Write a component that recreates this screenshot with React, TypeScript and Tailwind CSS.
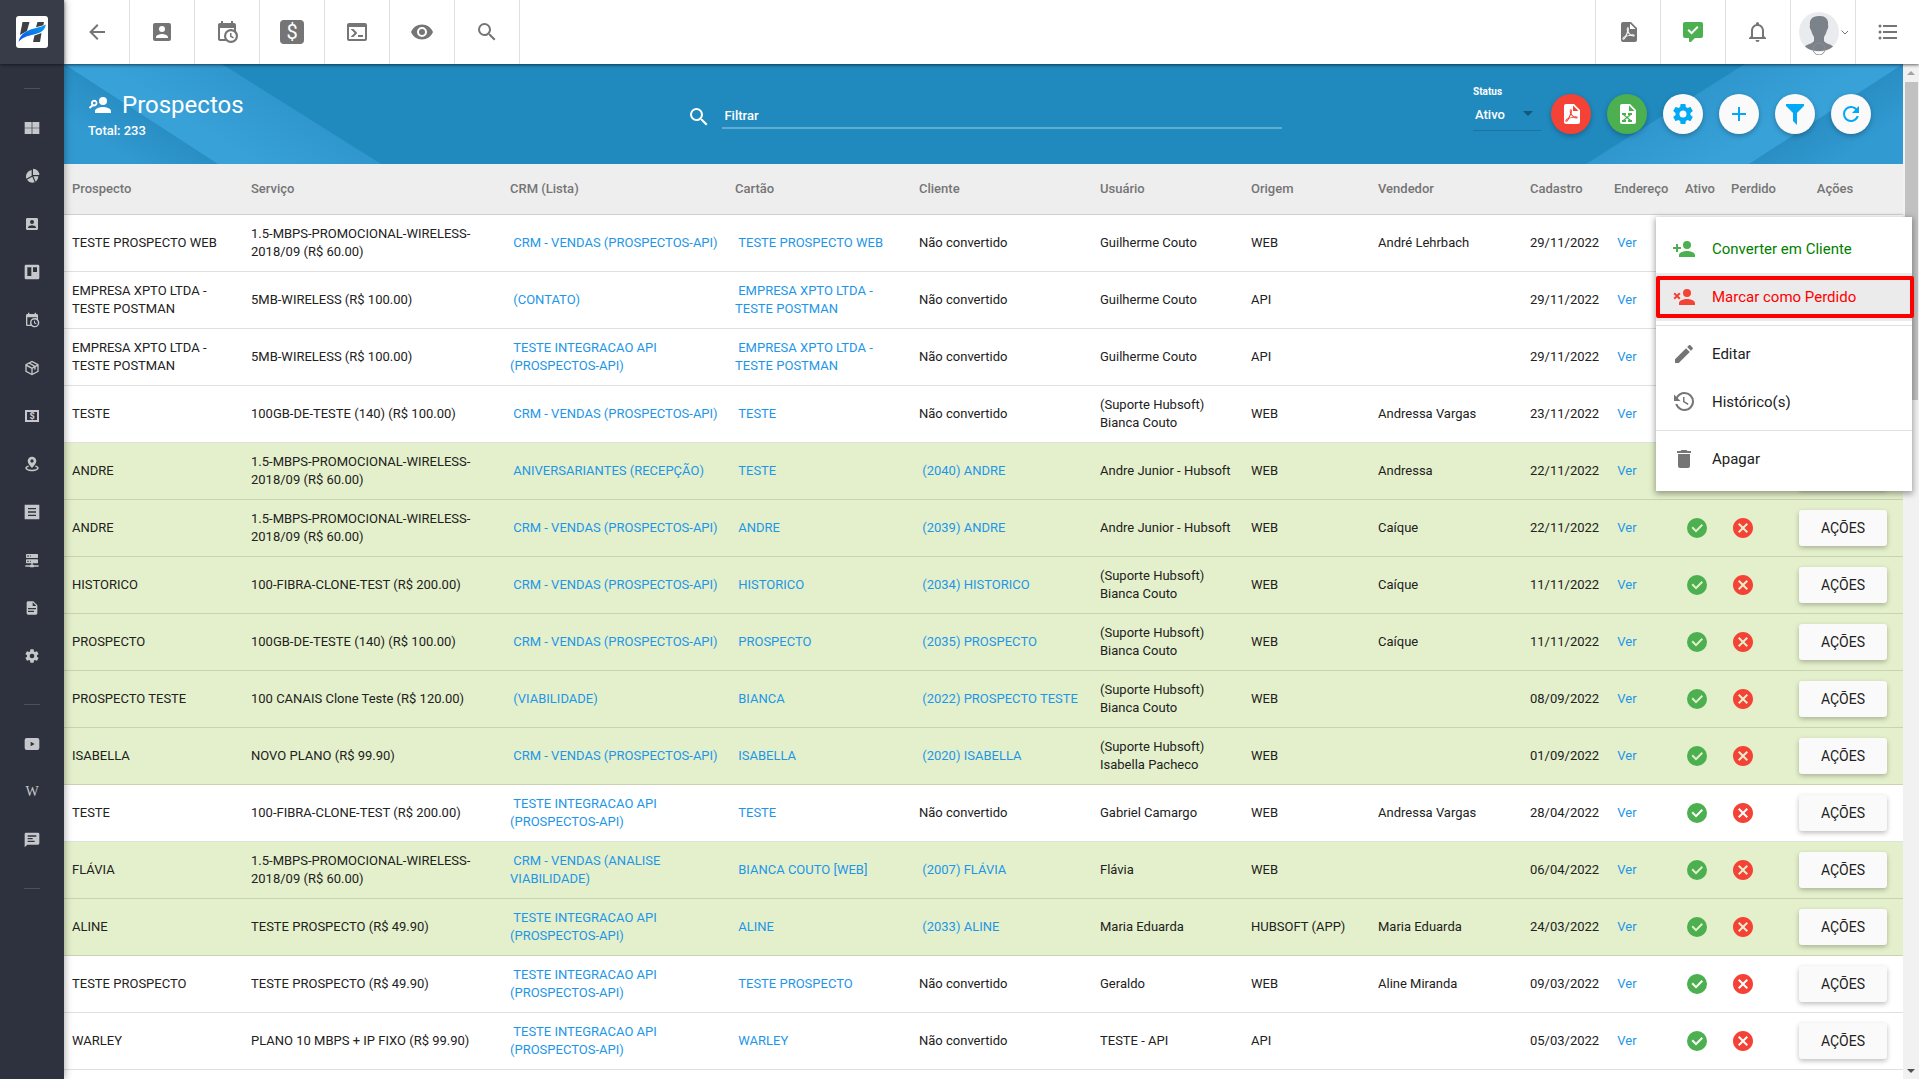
import React, { useState } from "react";

const icons = {
  arrowLeft:
    "M20,11V13H8L13.5,18.5L12.08,19.92L4.16,12L12.08,4.08L13.5,5.5L8,11H20Z",
  accountBox:
    "M6,17C6,15 10,13.9 12,13.9C14,13.9 18,15 18,17V18H6M15,9A3,3 0 0,1 12,12A3,3 0 0,1 9,9A3,3 0 0,1 12,6A3,3 0 0,1 15,9M3,5V19A2,2 0 0,0 5,21H19A2,2 0 0,0 21,19V5A2,2 0 0,0 19,3H5C3.89,3 3,3.9 3,5Z",
  calendarClock:
    "M15,13H16.5V15.82L18.94,17.23L18.19,18.53L15,16.69V13M19,8H5V19H9.67C9.24,18.09 9,17.07 9,16A7,7 0 0,1 16,9C17.07,9 18.09,9.24 19,9.67V8M5,21C3.89,21 3,20.1 3,19V5C3,3.89 3.89,3 5,3H6V1H8V3H16V1H18V3H19A2,2 0 0,1 21,5V11.1C22.24,12.36 23,14.09 23,16A7,7 0 0,1 16,23C14.09,23 12.36,22.24 11.1,21H5M16,11.15A4.85,4.85 0 0,0 11.15,16C11.15,18.68 13.32,20.85 16,20.85A4.85,4.85 0 0,0 20.85,16C20.85,13.32 18.68,11.15 16,11.15Z",
  console:
    "M20,19V7H4V19H20M20,3A2,2 0 0,1 22,5V19A2,2 0 0,1 20,21H4A2,2 0 0,1 2,19V5C2,3.89 2.9,3 4,3H20M13,17V15H18V17H13M9.58,13L5.57,9H8.4L11.7,12.3C12.09,12.69 12.09,13.33 11.7,13.72L8.42,17H5.59L9.58,13Z",
  eye: "M12,9A3,3 0 0,0 9,12A3,3 0 0,0 12,15A3,3 0 0,0 15,12A3,3 0 0,0 12,9M12,17A5,5 0 0,1 7,12A5,5 0 0,1 12,7A5,5 0 0,1 17,12A5,5 0 0,1 12,17M12,4.5C7,4.5 2.73,7.61 1,12C2.73,16.39 7,19.5 12,19.5C17,19.5 21.27,16.39 23,12C21.27,7.61 17,4.5 12,4.5Z",
  magnify:
    "M9.5,3A6.5,6.5 0 0,1 16,9.5C16,11.11 15.41,12.59 14.44,13.73L14.71,14H15.5L20.5,19L19,20.5L14,15.5V14.71L13.73,14.44C12.59,15.41 11.11,16 9.5,16A6.5,6.5 0 0,1 3,9.5A6.5,6.5 0 0,1 9.5,3M9.5,5C7,5 5,7 5,9.5C5,12 7,14 9.5,14C12,14 14,12 14,9.5C14,7 12,5 9.5,5Z",
  cog: "M12,15.5A3.5,3.5 0 0,1 8.5,12A3.5,3.5 0 0,1 12,8.5A3.5,3.5 0 0,1 15.5,12A3.5,3.5 0 0,1 12,15.5M19.43,12.97C19.47,12.65 19.5,12.33 19.5,12C19.5,11.67 19.47,11.34 19.43,11L21.54,9.37C21.73,9.22 21.78,8.95 21.66,8.73L19.66,5.27C19.54,5.05 19.27,4.96 19.05,5.05L16.56,6.05C16.04,5.66 15.5,5.32 14.87,5.07L14.5,2.42C14.46,2.18 14.25,2 14,2H10C9.75,2 9.54,2.18 9.5,2.42L9.13,5.07C8.5,5.32 7.96,5.66 7.44,6.05L4.95,5.05C4.73,4.96 4.46,5.05 4.34,5.27L2.34,8.73C2.21,8.95 2.27,9.22 2.46,9.37L4.57,11C4.53,11.34 4.5,11.67 4.5,12C4.5,12.33 4.53,12.65 4.57,12.97L2.46,14.63C2.27,14.78 2.21,15.05 2.34,15.27L4.34,18.73C4.46,18.95 4.73,19.03 4.95,18.95L7.44,17.94C7.96,18.34 8.5,18.68 9.13,18.93L9.5,21.58C9.54,21.82 9.75,22 10,22H14C14.25,22 14.46,21.82 14.5,21.58L14.87,18.93C15.5,18.67 16.04,18.34 16.56,17.94L19.05,18.95C19.27,19.03 19.54,18.95 19.66,18.73L21.66,15.27C21.78,15.05 21.73,14.78 21.54,14.63L19.43,12.97Z",
  filePdf:
    "M14,9H19.5L14,3.5V9M7,2H15L21,8V20A2,2 0 0,1 19,22H7C5.89,22 5,21.1 5,20V4A2,2 0 0,1 7,2M11.93,12.44C12.34,13.34 12.86,14.08 13.46,14.59L13.87,14.91C13,15.07 11.8,15.35 10.53,15.84V15.84L10.42,15.88L10.92,14.84C11.37,13.97 11.7,13.18 11.93,12.44M18.41,16.25C18.59,16.07 18.68,15.84 18.69,15.59C18.72,15.39 18.67,15.2 18.57,15.04C18.28,14.57 17.53,14.35 16.29,14.35L15,14.42L14.13,13.84C13.5,13.32 12.93,12.41 12.53,11.28L12.57,11.14C12.9,9.81 13.21,8.2 12.55,7.54C12.39,7.38 12.17,7.3 11.94,7.3H11.7C11.33,7.3 11,7.69 10.91,8.07C10.54,9.4 10.76,10.13 11.13,11.34V11.35C10.88,12.23 10.56,13.25 10.05,14.28L9.09,16.08L8.2,16.57C7,17.32 6.43,18.16 6.32,18.69C6.28,18.88 6.3,19.05 6.37,19.23L6.4,19.28L6.88,19.59L7.32,19.7C8.13,19.7 9.05,18.75 10.29,16.63L10.47,16.56C11.5,16.23 12.78,16 14.5,15.81C15.53,16.32 16.74,16.55 17.5,16.55C17.94,16.55 18.24,16.44 18.41,16.25M18,15.54L18.09,15.65C18.08,15.75 18.05,15.76 18,15.78H17.96L17.77,15.8C17.31,15.8 16.6,15.61 15.87,15.29C15.96,15.19 16,15.19 16.1,15.19C17.5,15.19 17.9,15.44 18,15.54M8.83,17C8.18,18.19 7.59,18.85 7.14,19C7.19,18.62 7.64,17.96 8.35,17.31L8.83,17M11.85,10.09C11.62,9.19 11.61,8.46 11.78,8.04L11.85,7.92L12,7.97C12.17,8.21 12.19,8.53 12.09,9.07L12.06,9.23L11.9,10.05L11.85,10.09Z",
  fileExcel:
    "M14,9H19.5L14,3.5V9M7,2H15L21,8V20A2,2 0 0,1 19,22H7C5.89,22 5,21.1 5,20V4A2,2 0 0,1 7,2M17,11H13V13H14L12,14.67L10,13H11V11H7V13H8L11,15.5L8,18H7V20H11V18H10L12,16.33L14,18H13V20H17V18H16L13,15.5L16,13H17V11Z",
  messageCheck:
    "M9,22A1,1 0 0,1 8,21V18H4A2,2 0 0,1 2,16V4C2,2.89 2.9,2 4,2H20A2,2 0 0,1 22,4V16A2,2 0 0,1 20,18H13.9L10.2,21.71C10,21.9 9.75,22 9.5,22H9M10.5,14.5L17.5,7.5L16.09,6.09L10.5,11.67L7.91,9.09L6.5,10.5Z",
  bell: "M16,17H7V10.5C7,8 9,6 11.5,6C14,6 16,8 16,10.5M18,16V10.5C18,7.43 15.86,4.86 13,4.18V3.5A1.5,1.5 0 0,0 11.5,2A1.5,1.5 0 0,0 10,3.5V4.18C7.13,4.86 5,7.43 5,10.5V16L3,18V19H20V18M11.5,22A2,2 0 0,0 13.5,20H9.5A2,2 0 0,0 11.5,22Z",
  list: "M7,5H21V7H7V5M7,13V11H21V13H7M4,4.5A1.5,1.5 0 0,1 5.5,6A1.5,1.5 0 0,1 4,7.5A1.5,1.5 0 0,1 2.5,6A1.5,1.5 0 0,1 4,4.5M4,10.5A1.5,1.5 0 0,1 5.5,12A1.5,1.5 0 0,1 4,13.5A1.5,1.5 0 0,1 2.5,12A1.5,1.5 0 0,1 4,10.5M7,19V17H21V19H7M4,16.5A1.5,1.5 0 0,1 5.5,18A1.5,1.5 0 0,1 4,19.5A1.5,1.5 0 0,1 2.5,18A1.5,1.5 0 0,1 4,16.5Z",
  accountPlus:
    "M15,14C12.33,14 7,15.33 7,18V20H23V18C23,15.33 17.67,14 15,14M6,10V7H4V10H1V12H4V15H6V12H9V10M15,12A4,4 0 0,0 19,8A4,4 0 0,0 15,4A4,4 0 0,0 11,8A4,4 0 0,0 15,12Z",
  accountRemove:
    "M15,14C12.33,14 7,15.33 7,18V20H23V18C23,15.33 17.67,14 15,14M5,9.59L2.88,7.46L1.46,8.88L3.59,11L1.46,13.12L2.88,14.54L5,12.41L7.12,14.54L8.54,13.12L6.41,11L8.54,8.88L7.12,7.46M15,12A4,4 0 0,0 19,8A4,4 0 0,0 15,4A4,4 0 0,0 11,8A4,4 0 0,0 15,12Z",
  accountSearch:
    "M15,14C12.33,14 7,15.33 7,18V20H23V18C23,15.33 17.67,14 15,14M15,12A4,4 0 0,0 19,8A4,4 0 0,0 15,4A4,4 0 0,0 11,8A4,4 0 0,0 15,12M6.2,6.8A3.3,3.3 0 0,0 3.4,11.9L0.8,14.2L2.2,15.8L5,13.2A3.3,3.3 0 1,0 6.2,6.8M6.3,8.7A1.4,1.4 0 0,1 6.3,11.5A1.4,1.4 0 0,1 6.3,8.7Z",
  pencil:
    "M20.71,7.04C21.1,6.65 21.1,6 20.71,5.63L18.37,3.29C18,2.9 17.35,2.9 16.96,3.29L15.12,5.12L18.87,8.87M3,17.25V21H6.75L17.81,9.93L14.06,6.18L3,17.25Z",
  history:
    "M11,7V12.11L15.71,14.9L16.5,13.62L12.5,11.25V7M12.5,2C8.97,2 5.91,3.92 4.27,6.77L2,4.5V11H8.5L5.75,8.25C6.96,5.73 9.5,4 12.5,4A7.5,7.5 0 0,1 20,11.5A7.5,7.5 0 0,1 12.5,19C9.23,19 6.47,16.91 5.44,14H3.34C4.44,18.03 8.11,21 12.5,21C17.74,21 22,16.75 22,11.5A9.5,9.5 0 0,0 12.5,2Z",
  trash:
    "M19,4H15.5L14.5,3H9.5L8.5,4H5V6H19M6,19A2,2 0 0,0 8,21H16A2,2 0 0,0 18,19V7H6V19Z",
  server:
    "M13,19H14A1,1 0 0,1 15,20H22V22H15A1,1 0 0,1 14,23H10A1,1 0 0,1 9,22H2V20H9A1,1 0 0,1 10,19H11V17H4A1,1 0 0,1 3,16V12A1,1 0 0,1 4,11H20A1,1 0 0,1 21,12V16A1,1 0 0,1 20,17H13V19M4,3H20A1,1 0 0,1 21,4V8A1,1 0 0,1 20,9H4A1,1 0 0,1 3,8V4A1,1 0 0,1 4,3M9,7H10V5H9V7M9,15H10V13H9V15M5,5V7H7V5H5M5,13V15H7V13H5Z",
  fileDocument:
    "M13,9H18.5L13,3.5V9M6,2H14L20,8V20A2,2 0 0,1 18,22H6C4.89,22 4,21.1 4,20V4C4,2.89 4.89,2 6,2M15,18V16H6V18H15M18,14V12H6V14H18Z",
  grid: "M1,3H11.5V11.5H1V3M12.5,3H23V11.5H12.5V3M1,12.5H11.5V21H1V12.5M12.5,12.5H23V21H12.5V12.5Z",
  pie: "M13.5,1A9.5,9.5 0 0,1 23,10.5H13.5V1M11.5,3V11.6L3.5,16A10,10 0 0,1 11.5,3M12.4,13L16,21.5A10,10 0 0,1 4.5,17.6L12.4,13M14,12.5H21.5A9.5,9.5 0 0,1 17.6,20.5L14,12.5Z",
  trello:
    "M3,1H21A2,2 0 0,1 23,3V21A2,2 0 0,1 21,23H3A2,2 0 0,1 1,21V3A2,2 0 0,1 3,1M5,5V18H11V5H5M13.5,5V12H19.500V5H13.500Z",
  cube: "M12,1L22,6.2V17.8L12,23L2,17.8V6.2L12,1M12,3.4L9.6,4.6L16.8,8.6L19.2,7.3L12,3.4M7.4,5.8L4.8,7.3L12,11.2L14.6,9.8L7.4,5.8M4,9.2V16.6L11,20.3V13L4,9.2M20,9.2L17.5,10.6V14L15.5,15V11.7L13,13V20.3L20,16.6V9.2Z",
  mapMarker:
    "M12,1A6.5,6.5 0 0,1 18.5,7.5C18.5,11.5 12,18 12,18C12,18 5.5,11.5 5.5,7.5A6.5,6.5 0 0,1 12,1M12,5A2.5,2.5 0 0,0 9.5,7.5A2.5,2.5 0 0,0 12,10A2.5,2.5 0 0,0 14.5,7.5A2.5,2.5 0 0,0 12,5M6.5,14.2L7.8,15.9C5.8,16.4 4.5,17.2 4.5,18C4.5,19.4 7.8,20.6 12,20.6C16.2,20.6 19.5,19.4 19.5,18C19.5,17.2 18.2,16.4 16.2,15.9L17.5,14.2C20.2,15 22,16.4 22,18C22,20.8 17.5,23 12,23C6.5,23 2,20.8 2,18C2,16.4 3.8,15 6.5,14.2Z",
  listBox:
    "M1,1H23V23H1V1M6,6V8H18V6H6M6,11V13H18V11H6M6,16V18H18V16H6Z",
  youtube:
    "M4,3H20A3,3 0 0,1 23,6V18A3,3 0 0,1 20,21H4A3,3 0 0,1 1,18V6A3,3 0 0,1 4,3M10,8.5V15.5L16,12L10,8.5Z",
  messageText:
    "M21,1A2,2 0 0,1 23,3V17A2,2 0 0,1 21,19H5L1,23V3C1,1.9 1.9,1 3,1H21M5.5,5V7H18.5V5H5.5M5.5,9V11H13V9H5.5M5.5,13V15H16V13H5.5Z",
  checkCircle:
    "M12,2A10,10 0 0,1 22,12A10,10 0 0,1 12,22A10,10 0 0,1 2,12A10,10 0 0,1 12,2M11,16.5L18,9.5L16.59,8.09L11,13.67L7.91,10.59L6.5,12L11,16.5Z",
  closeCircle:
    "M12,2C17.53,2 22,6.47 22,12C22,17.53 17.53,22 12,22C6.47,22 2,17.53 2,12C2,6.47 6.47,2 12,2M15.59,7L12,10.59L8.41,7L7,8.41L10.59,12L7,15.59L8.41,17L12,13.41L15.59,17L17,15.59L13.41,12L17,8.41L15.59,7Z",
  filter: "M3,2H21V4H20.92L14,10.92V22.91L10,18.91V10.91L3.09,4H3V2Z",
  refresh:
    "M17.65,6.35C16.2,4.9 14.21,4 12,4A8,8 0 0,0 4,12A8,8 0 0,0 12,20C15.73,20 18.84,17.45 19.73,14H17.65C16.83,16.33 14.61,18 12,18A6,6 0 0,1 6,12A6,6 0 0,1 12,6C13.66,6 15.14,6.69 16.22,7.78L13,11H20V4L17.65,6.35Z",
  plus: "M19,13H13V19H11V13H5V11H11V5H13V11H19V13Z",
};

type IconName = keyof typeof icons;

const Icon: React.FC<{ name: IconName; className?: string }> = ({
  name,
  className = "size-6",
}) => (
  <svg
    viewBox="0 0 24 24"
    fill="currentColor"
    fillRule="evenodd"
    className={className}
    aria-hidden="true"
  >
    <path d={icons[name]} />
  </svg>
);

interface Prospect {
  name: string;
  service: string;
  crm: string;
  card: string;
  client?: string;
  user: string;
  origin: string;
  seller?: string;
  date: string;
}

const wireless = "1.5-MBPS-PROMOCIONAL-WIRELESS-2018/09 (R$ 60.00)";
const vendas = "CRM - VENDAS (PROSPECTOS-API)";
const integracao = "TESTE INTEGRACAO API (PROSPECTOS-API)";
const bianca = "(Suporte Hubsoft) Bianca Couto";

const prospects: Prospect[] = [
  { name: "TESTE PROSPECTO WEB", service: wireless, crm: vendas, card: "TESTE PROSPECTO WEB", user: "Guilherme Couto", origin: "WEB", seller: "André Lehrbach", date: "29/11/2022" },
  { name: "EMPRESA XPTO LTDA - TESTE POSTMAN", service: "5MB-WIRELESS (R$ 100.00)", crm: "(CONTATO)", card: "EMPRESA XPTO LTDA - TESTE POSTMAN", user: "Guilherme Couto", origin: "API", date: "29/11/2022" },
  { name: "EMPRESA XPTO LTDA - TESTE POSTMAN", service: "5MB-WIRELESS (R$ 100.00)", crm: integracao, card: "EMPRESA XPTO LTDA - TESTE POSTMAN", user: "Guilherme Couto", origin: "API", date: "29/11/2022" },
  { name: "TESTE", service: "100GB-DE-TESTE (140) (R$ 100.00)", crm: vendas, card: "TESTE", user: bianca, origin: "WEB", seller: "Andressa Vargas", date: "23/11/2022" },
  { name: "ANDRE", service: wireless, crm: "ANIVERSARIANTES (RECEPÇÃO)", card: "TESTE", client: "(2040) ANDRE", user: "Andre Junior - Hubsoft", origin: "WEB", seller: "Andressa", date: "22/11/2022" },
  { name: "ANDRE", service: wireless, crm: vendas, card: "ANDRE", client: "(2039) ANDRE", user: "Andre Junior - Hubsoft", origin: "WEB", seller: "Caíque", date: "22/11/2022" },
  { name: "HISTORICO", service: "100-FIBRA-CLONE-TEST (R$ 200.00)", crm: vendas, card: "HISTORICO", client: "(2034) HISTORICO", user: bianca, origin: "WEB", seller: "Caíque", date: "11/11/2022" },
  { name: "PROSPECTO", service: "100GB-DE-TESTE (140) (R$ 100.00)", crm: vendas, card: "PROSPECTO", client: "(2035) PROSPECTO", user: bianca, origin: "WEB", seller: "Caíque", date: "11/11/2022" },
  { name: "PROSPECTO TESTE", service: "100 CANAIS Clone Teste (R$ 120.00)", crm: "(VIABILIDADE)", card: "BIANCA", client: "(2022) PROSPECTO TESTE", user: bianca, origin: "WEB", date: "08/09/2022" },
  { name: "ISABELLA", service: "NOVO PLANO (R$ 99.90)", crm: vendas, card: "ISABELLA", client: "(2020) ISABELLA", user: "(Suporte Hubsoft) Isabella Pacheco", origin: "WEB", date: "01/09/2022" },
  { name: "TESTE", service: "100-FIBRA-CLONE-TEST (R$ 200.00)", crm: integracao, card: "TESTE", user: "Gabriel Camargo", origin: "WEB", seller: "Andressa Vargas", date: "28/04/2022" },
  { name: "FLÁVIA", service: wireless, crm: "CRM - VENDAS (ANALISE VIABILIDADE)", card: "BIANCA COUTO [WEB]", client: "(2007) FLÁVIA", user: "Flávia", origin: "WEB", date: "06/04/2022" },
  { name: "ALINE", service: "TESTE PROSPECTO (R$ 49.90)", crm: integracao, card: "ALINE", client: "(2033) ALINE", user: "Maria Eduarda", origin: "HUBSOFT (APP)", seller: "Maria Eduarda", date: "24/03/2022" },
  { name: "TESTE PROSPECTO", service: "TESTE PROSPECTO (R$ 49.90)", crm: integracao, card: "TESTE PROSPECTO", user: "Geraldo", origin: "WEB", seller: "Aline Miranda", date: "09/03/2022" },
  { name: "WARLEY", service: "PLANO 10 MBPS + IP FIXO (R$ 99.90)", crm: integracao, card: "WARLEY", user: "TESTE - API", origin: "API", date: "05/03/2022" },
];

const columns = [
  { label: "Prospecto", width: "w-[179px]" },
  { label: "Serviço", width: "w-[259px]" },
  { label: "CRM (Lista)", width: "w-[225px]" },
  { label: "Cartão", width: "w-[184px]" },
  { label: "Cliente", width: "w-[181px]" },
  { label: "Usuário", width: "w-[151px]" },
  { label: "Origem", width: "w-[127px]" },
  { label: "Vendedor", width: "w-[152px]" },
  { label: "Cadastro", width: "w-[84px]" },
  { label: "Endereço", width: "w-[71px]" },
  { label: "Ativo", width: "w-[46px]" },
  { label: "Perdido", width: "w-[60px]" },
  { label: "Ações", width: "w-[120px]" },
];

const Logo = () => (
  <svg viewBox="0 0 32 32" className="size-8" role="img" aria-label="Hubsoft">
    <defs>
      <linearGradient id="swoosh" x1="0" y1="1" x2="1" y2="0">
        <stop offset="0" stopColor="#0b4df5" />
        <stop offset="1" stopColor="#0aa2ea" />
      </linearGradient>
    </defs>
    <rect width="32" height="32" rx="3" fill="#fff" />
    <path d="M6.5 6H13.500L11 15L4 19Z" fill="#3f4044" />
    <path d="M21.500 6H28L27.300 9.200L20 11.200Z" fill="#3f4044" />
    <path d="M18.500 19.500L25.500 17L24 26H17Z" fill="#3f4044" />
    <path
      d="M2.500 26C4 17 13 13.500 20 12C24 11.200 27 10 29.800 8.500C29 14 25 17 18 18.500C11 20 6 21.500 2.500 26Z"
      fill="url(#swoosh)"
    />
  </svg>
);

const sideIcons: IconName[] = ["grid", "pie", "accountBox", "trello", "calendarClock", "cube"];
const sideIconsBottom: IconName[] = ["mapMarker", "listBox", "server", "fileDocument", "cog"];

const SideLink: React.FC<{ label: string; children: React.ReactNode }> = ({
  label,
  children,
}) => (
  <a
    href="#"
    aria-label={label}
    className="flex h-12 w-full items-center justify-center text-[#c6c7ca]"
  >
    {children}
  </a>
);

const Sidebar = () => (
  <aside className="z-20 flex w-16 shrink-0 flex-col bg-[#2d323e] shadow-[0_0_8px_rgba(0,0,0,0.4)]">
    <div className="flex h-16 shrink-0 items-center justify-center bg-[#383c49] shadow-[0_1px_3px_rgba(0,0,0,0.5)]">
      <Logo />
    </div>
    <nav className="flex flex-col items-center">
      <hr className="mt-6 mb-[15px] w-4 border-[#4c505b]" />
      {sideIcons.map((name) => (
        <SideLink key={name} label={name}>
          <Icon name={name} className="size-4" />
        </SideLink>
      ))}
      <SideLink label="financeiro">
        <span className="flex h-3 w-[14px] items-center justify-center border-2 border-current text-[9px] leading-none font-black">
          $
        </span>
      </SideLink>
      {sideIconsBottom.map((name) => (
        <SideLink key={name} label={name}>
          <Icon name={name} className="size-4" />
        </SideLink>
      ))}
      <hr className="mt-6 mb-[15px] w-4 border-[#4c505b]" />
      <SideLink label="youtube">
        <Icon name="youtube" className="size-4" />
      </SideLink>
      <SideLink label="wiki">
        <span className="font-['Liberation_Serif',serif] text-[14px] leading-none">
          W
        </span>
      </SideLink>
      <SideLink label="chat">
        <Icon name="messageText" className="size-4" />
      </SideLink>
      <hr className="mt-6 w-4 border-[#4c505b]" />
    </nav>
  </aside>
);

const BarButton: React.FC<{
  label: string;
  side: "left" | "right";
  children: React.ReactNode;
}> = ({ label, side, children }) => (
  <button
    type="button"
    aria-label={label}
    className={`flex h-16 items-center justify-center border-[#e0e0e0] text-[#757575] ${
      side === "left"
        ? "w-[65px] border-r first:w-[66px]"
        : "w-[65px] border-l last:w-16"
    }`}
  >
    {children}
  </button>
);

const Topbar = () => (
  <header className="z-10 flex h-16 shrink-0 justify-between bg-white shadow-[0_1px_3px_rgba(0,0,0,0.6)]">
    <div className="flex">
      <BarButton label="Voltar" side="left">
        <Icon name="arrowLeft" />
      </BarButton>
      <BarButton label="Clientes" side="left">
        <Icon name="accountBox" />
      </BarButton>
      <BarButton label="Agenda" side="left">
        <Icon name="calendarClock" />
      </BarButton>
      <BarButton label="Financeiro" side="left">
        <span className="flex size-6 items-center justify-center rounded bg-[#757575] text-[20px] leading-none text-white">
          $
        </span>
      </BarButton>
      <BarButton label="Console" side="left">
        <Icon name="console" />
      </BarButton>
      <BarButton label="Visualizar" side="left">
        <Icon name="eye" />
      </BarButton>
      <BarButton label="Buscar" side="left">
        <Icon name="magnify" />
      </BarButton>
    </div>
    <div className="flex">
      <BarButton label="PDF" side="right">
        <Icon name="filePdf" />
      </BarButton>
      <BarButton label="Mensagens" side="right">
        <Icon name="messageCheck" className="size-6 text-[#4caf50]" />
      </BarButton>
      <BarButton label="Notificações" side="right">
        <Icon name="bell" />
      </BarButton>
      <BarButton label="Usuário" side="right">
        <svg viewBox="0 0 50 46" className="h-[46px] w-[50px]" aria-hidden="true">
          <circle cx="21" cy="23" r="20" fill="#e9ebee" />
          <path
            d="M21 7C27 6.500 31 10 30 16C30.600 17 30.200 20 29 21C28 25 27 26 26 28V32C28 35 33 35 35 37.500C29 43.500 13 43.500 7 37.500C9 35 14 35 16 32V28C15 26 14 25 13 21C11.800 20 11.400 17 12 16C11 11 14 7 21 7Z"
            fill="#7b828a"
          />
          <circle cx="21" cy="40" r="6" fill="none" stroke="#8d8f92" />
          <path d="M44.500 21.500L48 25L51.500 21.500" transform="translate(-1 0)" fill="none" stroke="#757575" />
        </svg>
      </BarButton>
      <BarButton label="Menu" side="right">
        <Icon name="list" />
      </BarButton>
    </div>
  </header>
);

const RoundButton: React.FC<{
  label: string;
  icon: IconName;
  className?: string;
}> = ({ label, icon, className = "bg-[#fafafa] text-[#03a9f4]" }) => (
  <button
    type="button"
    aria-label={label}
    className={`flex size-10 items-center justify-center rounded-full shadow-[0_2px_5px_rgba(0,0,0,0.26)] ${className}`}
  >
    <Icon name={icon} />
  </button>
);

// folded paper stripes, mirrored on the right side of the header
const HeaderStripes: React.FC<{ className: string }> = ({ className }) => (
  <svg
    viewBox="0 0 320 100"
    className={`absolute top-0 h-full w-80 ${className}`}
    aria-hidden="true"
  >
    <defs>
      <linearGradient id="band" gradientUnits="userSpaceOnUse" x1="236" y1="50" x2="200" y2="106">
        <stop offset="0" stopColor="#2f97ce" />
        <stop offset="1" stopColor="#38a1d8" />
      </linearGradient>
      <linearGradient id="fold" gradientUnits="userSpaceOnUse" x1="77" y1="50" x2="52" y2="89">
        <stop offset="0" stopColor="#298ec4" />
        <stop offset="1" stopColor="#319ad1" />
      </linearGradient>
    </defs>
    <path d="M0 0H158L317 100H0Z" fill="url(#band)" />
    <path d="M0 0L154 100H0Z" fill="url(#fold)" />
  </svg>
);

const PageHeader = () => {
  const [filter, setFilter] = useState("");

  return (
    <div className="relative flex h-[100px] items-start justify-between bg-[#2089be] pr-8 pl-6 text-white">
      <HeaderStripes className="left-0" />
      <HeaderStripes className="right-0 -scale-x-100" />
      <div className="relative pt-[26px]">
        <h1 className="flex items-center gap-[10px] text-2xl leading-[30px]">
          <Icon name="accountSearch" />
          Prospectos
        </h1>
        <p className="text-[13px] leading-[22px] font-medium">Total: 233</p>
      </div>
      <div className="absolute top-0 left-[33.9%] flex w-[595px] gap-[11px] pt-10">
        <Icon name="magnify" className="mt-px size-6 shrink-0" />
        <input
          type="text"
          aria-label="Filtrar"
          placeholder="Filtrar"
          value={filter}
          onChange={(e) => setFilter(e.target.value)}
          className="h-[25px] w-full border-b-2 border-white/30 px-[2px] text-[13px] leading-5 font-medium outline-none placeholder:text-white"
        />
      </div>
      <div className="relative flex pt-[30px]">
        <div className="mr-[10px] -mt-2 flex w-[68px] flex-col">
          <label htmlFor="status" className="text-[10px] leading-3 font-bold">
            Status
          </label>
          <div className="relative mt-1 border-b border-black/15">
            <select
              id="status"
              className="h-[26px] w-full appearance-none bg-transparent px-[2px] pb-1 text-[13px] font-medium"
            >
              <option>Ativo</option>
            </select>
            <span className="pointer-events-none absolute top-[9px] right-2 border-x-[5px] border-t-[5px] border-x-transparent border-t-[#14587a]" />
          </div>
        </div>
        <div className="flex gap-4">
          <RoundButton label="Exportar PDF" icon="filePdf" className="bg-[#f44336] text-white" />
          <RoundButton label="Exportar Excel" icon="fileExcel" className="bg-[#4caf50] text-white" />
          <RoundButton label="Configurações" icon="cog" />
          <RoundButton label="Adicionar" icon="plus" />
          <RoundButton label="Filtros" icon="filter" />
          <RoundButton label="Atualizar" icon="refresh" />
        </div>
      </div>
    </div>
  );
};

const CellLink: React.FC<{ children: React.ReactNode }> = ({ children }) => (
  <a href="#" className="text-[#1e96e8]">
    &nbsp;{children}
  </a>
);

const ProspectTable = () => (
  <table className="w-full table-fixed border-separate border-spacing-0 text-[13px] leading-[18px]">
    <thead>
      <tr className="h-[51px] bg-[#eeeeee] text-left text-[#757575]">
        {columns.map((column) => (
          <th
            key={column.label}
            className={`border-b border-[#cfcfcf] pl-2 font-medium last:pr-6 last:text-center ${column.width}`}
          >
            {column.label}
          </th>
        ))}
      </tr>
    </thead>
    <tbody>
      {prospects.map((p, i) => (
        <tr
          key={i}
          className={`h-[57px] *:border-b *:pl-2 ${
            p.client
              ? "bg-[#e4f0cb] *:border-[#c9d3b2]"
              : "bg-white *:border-[#e0e0e0]"
          }`}
        >
          <td className="pr-2">{p.name}</td>
          <td className="pr-6">{p.service}</td>
          <td className="pr-2">
            <CellLink>{p.crm}</CellLink>
          </td>
          <td className="pr-4">
            <CellLink>{p.card}</CellLink>
          </td>
          <td>{p.client ? <CellLink>{p.client}</CellLink> : "Não convertido"}</td>
          <td className="pr-2">{p.user}</td>
          <td>{p.origin}</td>
          <td>{p.seller}</td>
          <td>{p.date}</td>
          <td>
            <CellLink>Ver</CellLink>
          </td>
          <td>
            <Icon name="checkCircle" className="size-6 text-[#4caf50]" />
          </td>
          <td>
            <Icon name="closeCircle" className="size-6 text-[#f44336]" />
          </td>
          <td className="pr-2 text-center">
            <button
              type="button"
              className="h-9 w-[88px] rounded-[3px] bg-[#fafafa] text-sm shadow-[0_2px_5px_rgba(0,0,0,0.26)]"
            >
              AÇÕES
            </button>
          </td>
        </tr>
      ))}
    </tbody>
  </table>
);

const MenuItem: React.FC<{
  icon: IconName;
  label: string;
  iconClass?: string;
  className?: string;
}> = ({ icon, label, iconClass = "text-[#757575]", className = "" }) => (
  <button
    type="button"
    role="menuitem"
    className={`flex h-12 w-full items-center gap-4 px-4 text-left text-[15px] ${className}`}
  >
    <Icon name={icon} className={`size-6 ${iconClass}`} />
    {label}
  </button>
);

const ActionsMenu = () => (
  <div
    role="menu"
    className="absolute top-[217px] right-[7px] z-30 w-64 bg-white py-2 shadow-[0_2px_6px_1px_rgba(0,0,0,0.35)]"
  >
    <MenuItem
      icon="accountPlus"
      label="Converter em Cliente"
      iconClass="text-[#4caf50]"
      className="text-[#008000]"
    />
    <div className="relative">
      <MenuItem
        icon="accountRemove"
        label="Marcar como Perdido"
        iconClass="text-[#f44336]"
        className="bg-[#ebebeb] text-[#ff0000]"
      />
      <div className="pointer-events-none absolute -right-[2px] bottom-[3px] left-0 h-[42px] rounded-[2px] border-4 border-[#ff0000]" />
    </div>
    <hr className="my-1 border-[#e0e0e0]" />
    <MenuItem icon="pencil" label="Editar" />
    <MenuItem icon="history" label="Histórico(s)" />
    <hr className="my-1 border-[#e0e0e0]" />
    <MenuItem icon="trash" label="Apagar" />
  </div>
);

const Scrollbar = () => (
  <div className="flex w-4 shrink-0 flex-col items-center justify-between bg-[#f1f1f1]" aria-hidden="true">
    <div className="flex h-[336px] flex-col items-center">
      <span className="my-[7px] border-x-4 border-b-4 border-x-transparent border-b-[#a3a3a3]" />
      <span className="w-[13px] flex-1 bg-[#c1c1c1]" />
    </div>
    <span className="mb-[6px] border-x-4 border-t-4 border-x-transparent border-t-[#505050]" />
  </div>
);

const App: React.FC = () => {
  return (
    <div className="relative flex h-screen overflow-hidden bg-white font-[Roboto,sans-serif] text-[#212121]">
      <Sidebar />
      <div className="flex min-w-0 flex-1 flex-col">
        <Topbar />
        <div className="flex min-h-0 flex-1">
          <main className="min-w-0 flex-1 overflow-hidden">
            <PageHeader />
            <ProspectTable />
          </main>
          <Scrollbar />
        </div>
      </div>
      <ActionsMenu />
    </div>
  );
};

export default App;
